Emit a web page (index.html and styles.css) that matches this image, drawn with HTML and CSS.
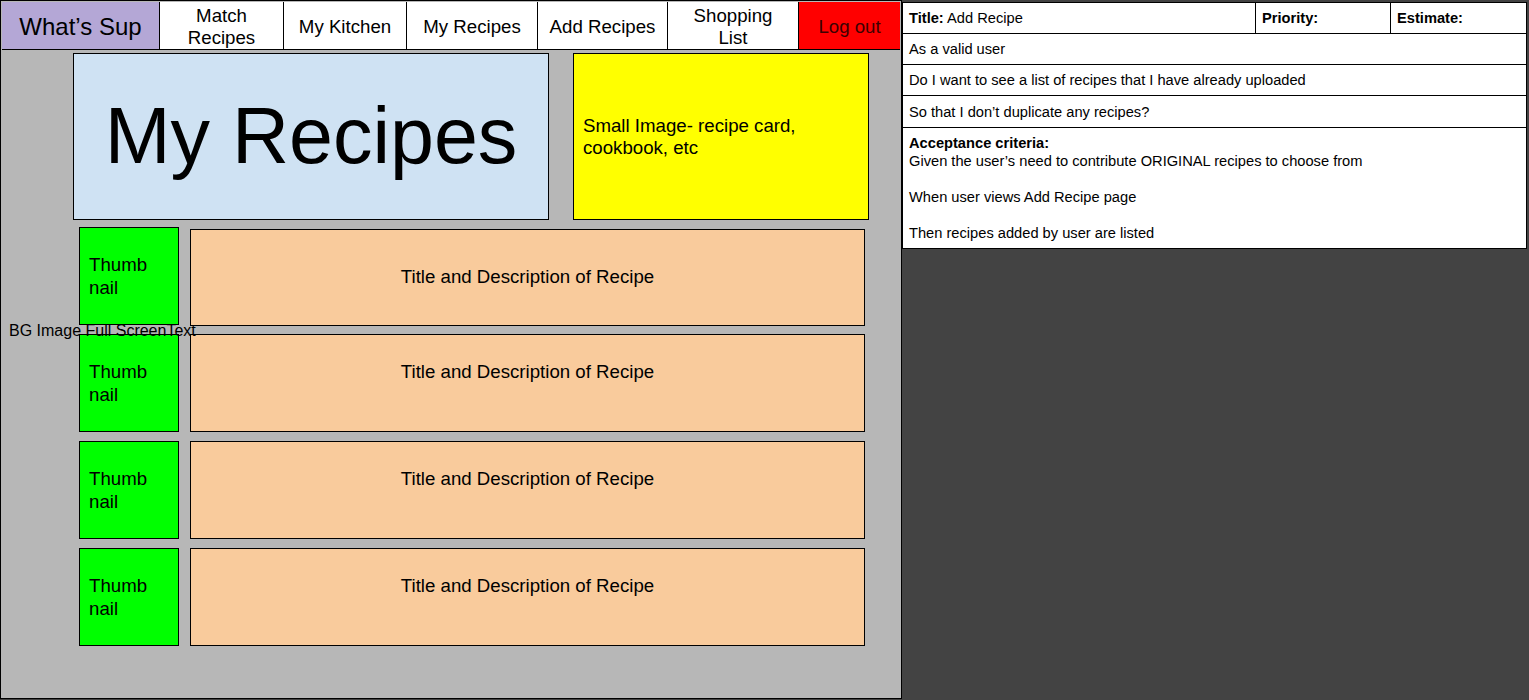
FILE: index.html
```html
<!DOCTYPE html>
<html lang="en">
<head>
  <meta charset="UTF-8">
  <title>What's Sup - My Recipes</title>
  <link rel="stylesheet" href="styles.css">
</head>
<body>
  <div class="page">

    <!-- Mockup board -->
    <div class="board">
      <nav class="topnav">
        <a class="brand" href="#">What’s Sup</a>
        <a href="#">Match<br>Recipes</a>
        <a href="#">My Kitchen</a>
        <a href="#">My Recipes</a>
        <a href="#">Add Recipes</a>
        <a href="#">Shopping<br>List</a>
        <a class="logout" href="#">Log out</a>
      </nav>

      <div class="hero">
        <div class="hero-title">My Recipes</div>
        <div class="hero-image">Small Image- recipe card, cookbook, etc</div>
      </div>

      <div class="recipe-list">
        <div class="recipe">
          <div class="thumb">Thumb<br>nail</div>
          <div class="recipe-info first">Title and Description of Recipe</div>
        </div>
        <div class="recipe">
          <div class="thumb">Thumb<br>nail</div>
          <div class="recipe-info">Title and Description of Recipe</div>
        </div>
        <div class="recipe">
          <div class="thumb">Thumb<br>nail</div>
          <div class="recipe-info">Title and Description of Recipe</div>
        </div>
        <div class="recipe">
          <div class="thumb">Thumb<br>nail</div>
          <div class="recipe-info">Title and Description of Recipe</div>
        </div>
      </div>

      <span class="bg-label">BG Image Full ScreenText</span>
    </div>

    <!-- User story card -->
    <table class="story">
      <colgroup>
        <col class="col-title">
        <col class="col-priority">
        <col class="col-estimate">
      </colgroup>
      <tr class="line">
        <td><b>Title:</b> Add Recipe</td>
        <td><b>Priority:</b></td>
        <td><b>Estimate:</b></td>
      </tr>
      <tr class="line">
        <td colspan="3">As a valid user</td>
      </tr>
      <tr class="line">
        <td colspan="3">Do I want to see a list of recipes that I have already uploaded</td>
      </tr>
      <tr class="line">
        <td colspan="3">So that I don’t duplicate any recipes?</td>
      </tr>
      <tr>
        <td colspan="3" class="criteria">
          <b>Acceptance criteria:</b><br>
          Given the user’s need to contribute ORIGINAL recipes to choose from<br>
          <br>
          When user views Add Recipe page<br>
          <br>
          Then recipes added by user are listed
        </td>
      </tr>
    </table>

  </div>
</body>
</html>
```

FILE: styles.css
```css
* {
  margin: 0;
  padding: 0;
  box-sizing: border-box;
}

body {
  font-family: 'Liberation Sans', Arial, sans-serif;
  background: #434343;
  color: #000;
  width: 1529px;
  height: 700px;
  overflow: hidden;
}

.page {
  display: flex;
  align-items: flex-start;
}

/* Mockup board */
.board {
  position: relative;
  width: 902px;
  height: 699px;
  border: 1px solid #000;
  background: #b7b7b7;
  padding: 1px;
}

.topnav {
  display: grid;
  grid-template-columns: 158px 124px 123px 131px 130px 131px 101px;
  height: 48px;
  border-bottom: 1px solid #000;
}

.topnav a {
  display: flex;
  align-items: center;
  justify-content: center;
  text-align: center;
  background: #fff;
  color: #000;
  text-decoration: none;
  font-size: 18.67px;
  line-height: 22px;
  padding-top: 3px;
  border-right: 1px solid #000;
}

.topnav .brand {
  background: #b4a7d6;
  font-size: 24px;
}

.topnav .logout {
  background: #ff0000;
  color: #3d0000;
  border-right: none;
}

/* Hero */
.hero {
  display: flex;
  gap: 24px;
  margin: 3px 0 0 71px;
}

.hero-title {
  width: 476px;
  height: 167px;
  background: #cfe2f3;
  border: 1px solid #000;
  display: flex;
  align-items: center;
  justify-content: center;
  font-size: 79px;
  padding-bottom: 2px;
}

.hero-image {
  width: 296px;
  height: 167px;
  background: #ffff00;
  border: 1px solid #000;
  display: flex;
  align-items: center;
  padding: 0 40px 0 9px;
  font-size: 18.67px;
  line-height: 22px;
}

/* Recipe rows */
.recipe-list {
  display: flex;
  flex-direction: column;
  gap: 9px;
  margin: 7px 0 0 77px;
}

.recipe {
  display: flex;
  gap: 11px;
  height: 98px;
}

.thumb {
  width: 100px;
  background: #00ff00;
  border: 1px solid #000;
  display: flex;
  align-items: center;
  padding-left: 9px;
  font-size: 18.67px;
  line-height: 23px;
}

.recipe-info {
  width: 675px;
  background: #f9cb9c;
  border: 1px solid #000;
  display: flex;
  align-items: center;
  justify-content: center;
  font-size: 18.67px;
  padding-bottom: 22px;
}

.recipe-info.first {
  margin-top: 2px;
  height: 97px;
  padding-bottom: 2px;
}

.bg-label {
  position: absolute;
  left: 8px;
  top: 320px;
  font-size: 16px;
  line-height: 20px;
  white-space: nowrap;
}

/* User story card */
.story {
  width: 624px;
  margin-top: 2px;
  border-collapse: collapse;
  background: #fff;
  font-size: 14.67px;
  table-layout: fixed;
}

.col-title { width: 353px; }
.col-priority { width: 135px; }
.col-estimate { width: 136px; }

.story td {
  border: 1px solid #000;
  padding: 0 6px;
  vertical-align: middle;
}

.story .line td {
  height: 31px;
}

.story .line:nth-child(4) td {
  height: 32px;
}

.story .criteria {
  padding: 6px 6px 6px;
  line-height: 18px;
  vertical-align: top;
}
```
